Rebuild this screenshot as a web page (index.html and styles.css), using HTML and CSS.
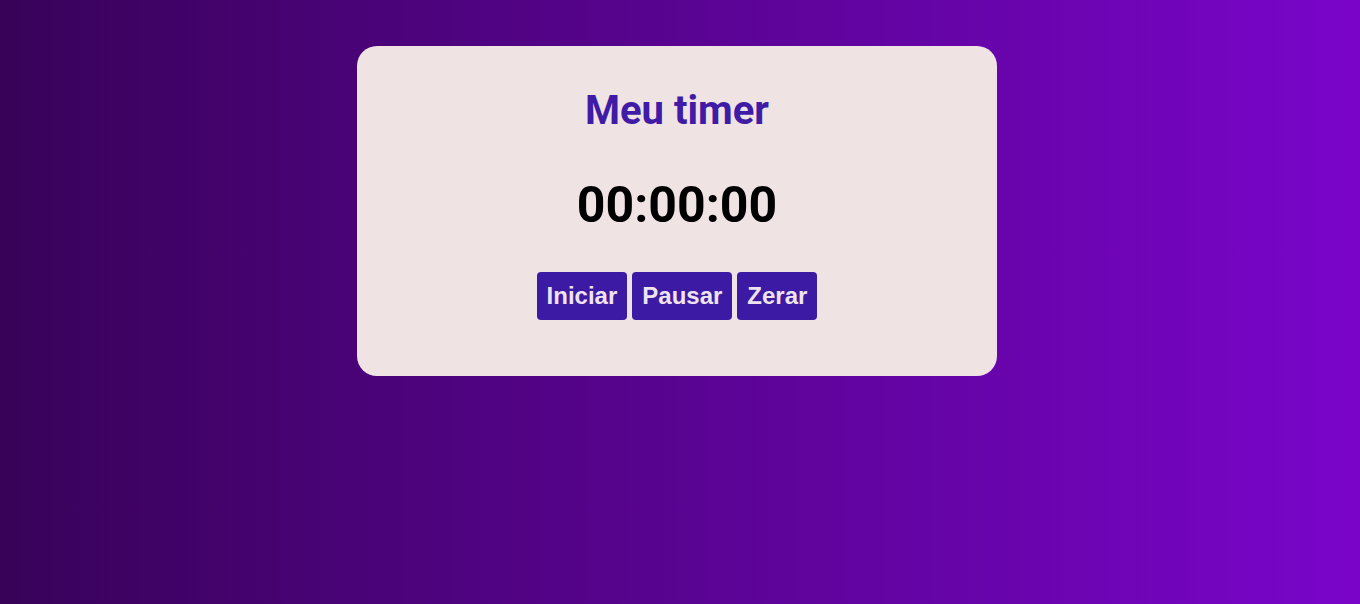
FILE: index.html
```html
<!DOCTYPE html>
<html lang="pt-BR">
<head>
<meta charset="utf-8">
<title>Meu timer</title>
<link rel="stylesheet" href="styles.css">
</head>
<body>
<main class="page">
  <section class="card">
    <h1 class="title">Meu timer</h1>
    <div class="time">00:00:00</div>
    <div class="actions">
      <button class="btn" type="button">Iniciar</button>
      <button class="btn" type="button">Pausar</button>
      <button class="btn" type="button">Zerar</button>
    </div>
  </section>
</main>
</body>
</html>
```
FILE: styles.css
```css
html, body {
  margin: 0;
  height: 100%;
}
body {
  background: linear-gradient(to right, #380259, #7a05ca);
  font-family: Roboto, "Liberation Sans", sans-serif;
}
.page {
  display: flex;
  justify-content: center;
  padding: 46px 6px 0 0;
}
.card {
  width: 640px;
  box-sizing: border-box;
  background: #efe3e3;
  border-radius: 20px;
  padding: 41px 0 56px;
  display: flex;
  flex-direction: column;
  align-items: center;
}
.title {
  margin: 0;
  font-size: 40px;
  line-height: 47px;
  font-weight: 700;
  color: #3f1ba6;
}
.time {
  margin: 42px 0 38px;
  font-size: 50px;
  line-height: 58px;
  font-weight: 700;
  color: #000;
}
.actions {
  display: flex;
  gap: 5px;
}
.btn {
  font-family: "Liberation Sans", Arial, sans-serif;
  font-size: 24px;
  font-weight: 700;
  line-height: 26px;
  padding: 11px 10px;
  border: 0;
  border-radius: 4px;
  background: #3c1aa3;
  color: #efe3f0;
}
```
